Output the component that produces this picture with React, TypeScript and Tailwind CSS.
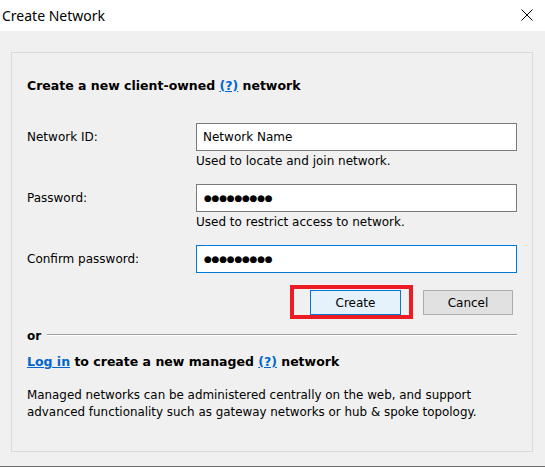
import React from "react"

const body = "font-['DejaVu_Sans',Verdana,sans-serif] text-[12px] leading-[16px] text-black"

const Field: React.FC<{
  label: string
  value: string
  masked?: boolean
  focused?: boolean
  hint?: string
}> = ({ label, value, masked, focused, hint }) => (
  <div>
    <div className="flex items-center">
      <div className="w-[169px]">{label}</div>
      <div
        className={`flex-1 h-[28px] bg-white border flex items-center pl-[6px] ${
          focused ? "border-[#0078d7]" : "border-[#7a7a7a]"
        }`}
      >
        {masked ? (
          <span className="text-[9px] leading-none tracking-[-0.25px] pl-[1px]">
            {value}
          </span>
        ) : (
          <span>{value}</span>
        )}
      </div>
    </div>
    {hint && <div className="pl-[169px] mt-[2px]">{hint}</div>}
  </div>
)

export default function App() {
  return (
    <div className={`w-[545px] h-[467px] bg-[#f0f0f0] flex flex-col overflow-hidden ${body}`}>
      {/* title bar */}
      <div className="h-[31px] bg-white flex items-center justify-between pl-[2px] pr-[12px]">
        <span className="font-['Noto_Sans',sans-serif] text-[14px] leading-none">
          Create Network
        </span>
        <svg width="12" height="12" viewBox="0 0 12 12" className="mb-[1px]">
          <path d="M0.5 0.5 L11.5 11.5 M11.5 0.5 L0.5 11.5" stroke="#000" strokeWidth="1" />
        </svg>
      </div>

      {/* dialog body */}
      <div className="flex-1 pt-[21px] px-[11px] border-b border-[#6d6d6d]">
        <div className="w-[522px] h-[400px] border border-[#d9d9d9] px-[15px]">
          <div className="mt-[25px] font-bold text-[12.5px]">
            Create a new client-owned{" "}
            <span className="text-[#0066cc] underline">(?)</span> network
          </div>

          <div className="mt-[29px]">
            <Field label="Network ID:" value="Network Name" hint="Used to locate and join network." />
          </div>
          <div className="mt-[15px]">
            <Field
              label="Password:"
              value="●●●●●●●●●"
              masked
              hint="Used to restrict access to network."
            />
          </div>
          <div className="mt-[15px]">
            <Field label="Confirm password:" value="●●●●●●●●●" masked focused />
          </div>

          <div className="mt-[17px] flex justify-end gap-[22px] mr-[4px]">
            <div className="relative">
              <button className="w-[91px] h-[25px] bg-[#e5f1fb] border border-[#0078d7] flex items-center justify-center">
                Create
              </button>
              {/* annotation */}
              <div className="absolute left-[-20px] top-[-5px] w-[123px] h-[34px] border-[4px] border-[#ed1c24]" />
            </div>
            <button className="w-[90px] h-[25px] bg-[#e1e1e1] border border-[#adadad] flex items-center justify-center">
              Cancel
            </button>
          </div>

          <div className="mt-[13px] flex items-center gap-[6px]">
            <span className="font-bold">or</span>
            <div className="flex-1 border-t border-[#a0a0a0] border-b border-b-white mb-[2px]" />
          </div>

          <div className="mt-[10px] font-bold text-[12.5px]">
            <span className="text-[#0066cc] underline">Log in</span> to create a new managed{" "}
            <span className="text-[#0066cc] underline">(?)</span> network
          </div>

          <p className="mt-[17px] leading-[17px] text-[11.9px]">
            Managed networks can be administered centrally on the web, and support advanced
            functionality such as gateway networks or hub &amp; spoke topology.
          </p>
        </div>
      </div>
    </div>
  )
}
